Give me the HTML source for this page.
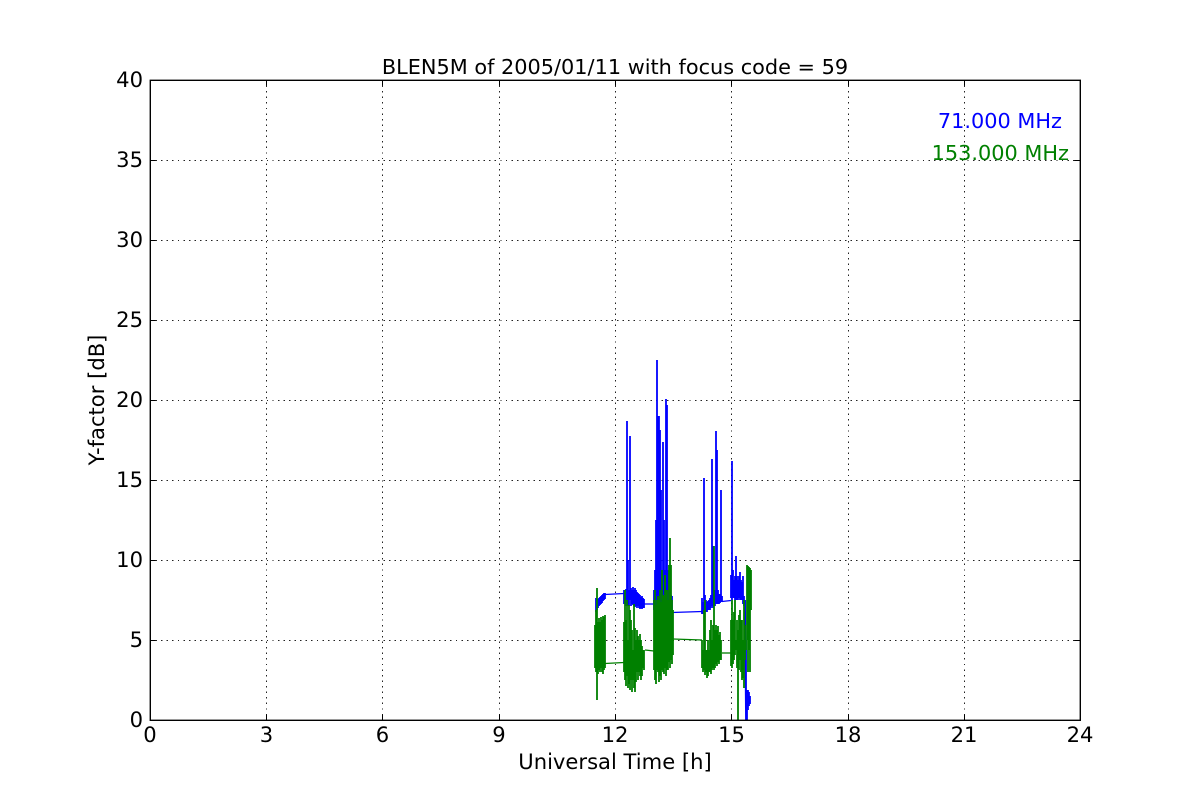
<!DOCTYPE html>
<html><head><meta charset="utf-8"><style>
html,body{margin:0;padding:0;background:#fff;width:1200px;height:800px;overflow:hidden}
svg{display:block}
text{font-family:"DejaVu Sans",sans-serif;font-size:20.830px;fill:#000}
.l text,text.l{font-size:21.100px}
</style></head><body>
<svg width="1200" height="800" viewBox="0 0 1200 800">
<rect width="1200" height="800" fill="#fff"/>
<g stroke="#222" stroke-width="1" stroke-dasharray="1.390 4.170" fill="none" shape-rendering="crispEdges">
<path d="M266.500 80V720M382.500 80V720M499.500 80V720M615.500 80V720M731.500 80V720M848.500 80V720M964.500 80V720"/>
<path d="M150 640.500H1080M150 560.500H1080M150 480.500H1080M150 400.500H1080M150 320.500H1080M150 240.500H1080M150 160.500H1080"/>
</g>
<!-- blue -->
<g fill="none" stroke="#0000ff" stroke-width="1.800">
<path d="M596 612V598M597 610V600M598 608V599M599 606V598M600 605V597M601 604V596M602 603V595M603 601V594M604 600V593M605 599V593"/>
<path stroke-width="1.300" d="M605 594.500L624 593.500"/>
<path d="M624 604V590M625 604V590M626 606V589M627 600V421M628 606V560M629 606V590M630 600V436M631 606V588M632 604V590M633 605V587M634 606V590M635 607V588M636 606V590M637 608V592M638 606V593M639 608V594M640 609V595M641 608V597M642 609V596M643 608V598M644 608V599"/>
<path stroke-width="1.300" d="M644.500 604L654 604"/>
<path d="M654 610V590M655 612V570M656 612V520M657 610V360M658 612V416M659 610V416M660 610V430M661 612V490M662 610V570M663 610V442M664 610V520M665 610V570M666 608V399M667 610V405M668 610V570M669 608V590M670 610V590M671 610V595M672 612V596"/>
<path stroke-width="1.300" d="M672 612.500L702 611.500"/>
<path d="M702 614V598M703 614V602M704 610V478M705 612V595M706 612V600M707 612V602M708 610V601M709 610V600M710 610V598M711 608V595M712 606V459M713 608V546M714 606V596M715 606V590M716 604V431M717 604V450M718 604V590M719 604V594M720 603V594M721 602V490M722 602V596"/>
<path stroke-width="1.300" d="M722 601.500L731 600.500"/>
<path d="M731 598V575M732 600V461M733 598V570M734 598V580M735 600V576M736 600V556M737 600V576M738 600V580M739 598V576M740 600V572M741 600V580M742 600V582M743 604V576M744 606V596M745 610V600"/>
<path d="M745 600L746 720M746 640V720M747 690V720M748 690V710M749 692V706M750 696V704"/>
</g>
<!-- green -->
<g fill="none" stroke="#008000" stroke-width="1.800">
<path d="M595 668V625M596 672V610M597 700V588M598 674V622M599 670V618M600 672V622M601 668V617M602 672V620M603 674V616M604 670V617M605 668V615"/>
<path stroke-width="1.300" d="M605 663.500L624 662.500"/>
<path d="M624 672V622M625 680V590M626 686V620M627 676V600M628 688V640M629 684V605M630 690V610M631 680V620M632 692V630M633 680V650M634 688V604M635 692V628M636 682V640M637 672V630M638 680V636M639 672V640M640 676V634M641 680V640M642 676V646M643 668V650M644 670V650"/>
<path stroke-width="1.300" d="M645 650L654 651"/>
<path d="M654 670V600M655 680V590M656 684V605M657 670V600M658 672V596M659 682V600M660 676V590M661 680V602M662 670V570M663 672V595M664 674V596M665 668V575M666 676V590M667 670V590M668 670V600M669 662V565M670 668V538M671 660V565M672 664V600M673 655V610"/>
<path stroke-width="1.300" d="M673 639L702 640"/>
<path d="M702 668V640M703 672V650M704 670V610M705 675V600M706 672V650M707 678V650M708 676V640M709 672V650M710 672V630M711 674V620M712 670V640M713 668V625M714 670V546M715 668V630M716 664V625M717 666V630M718 662V626M719 664V635M720 660V632M721 660V640"/>
<path stroke-width="1.300" d="M722 653L731 653"/>
<path d="M731 666V620M732 668V600M733 664V620M734 660V612M735 655V600M736 650V640M737 668V620M738 720V630M739 670V615M740 660V610M741 672V620M742 680V620M743 678V640M744 688V600M745 660V625M746 650V640M747 640V565M748 672V566M749 650V567M750 672V568M751 610V570"/>
</g>
<rect x="150.300" y="80.300" width="930" height="640" fill="none" stroke="#000" stroke-width="1.390"/>
<g stroke="#000" stroke-width="1" fill="none" shape-rendering="crispEdges">
<path d="M266.500 80V85.500M382.500 80V85.500M499.500 80V85.500M615.500 80V85.500M731.500 80V85.500M848.500 80V85.500M964.500 80V85.500"/>
<path d="M266.500 720V714.500M382.500 720V714.500M499.500 720V714.500M615.500 720V714.500M731.500 720V714.500M848.500 720V714.500M964.500 720V714.500"/>
<path d="M150 640.500H155.500M150 560.500H155.500M150 480.500H155.500M150 400.500H155.500M150 320.500H155.500M150 240.500H155.500M150 160.500H155.500"/>
<path d="M1080 640.500H1074.500M1080 560.500H1074.500M1080 480.500H1074.500M1080 400.500H1074.500M1080 320.500H1074.500M1080 240.500H1074.500M1080 160.500H1074.500"/>
</g>
<text x="615" y="74" text-anchor="middle">BLEN5M of 2005/01/11 with focus code = 59</text>
<text x="1062" y="128" text-anchor="end" style="fill:#0000ff">71.000 MHz</text>
<text x="1069" y="160" text-anchor="end" style="fill:#008000">153.000 MHz</text>
<g text-anchor="end" class="l">
<text x="143" y="727">0</text><text x="143" y="647">5</text><text x="143" y="567">10</text><text x="143" y="487">15</text><text x="143" y="407">20</text><text x="143" y="327">25</text><text x="143" y="247">30</text><text x="143" y="167">35</text><text x="143" y="87">40</text>
</g>
<g text-anchor="middle" class="l">
<text x="150" y="742">0</text><text x="266.500" y="742">3</text><text x="382.500" y="742">6</text><text x="499" y="742">9</text><text x="615" y="742">12</text><text x="731.500" y="742">15</text><text x="848" y="742">18</text><text x="964" y="742">21</text><text x="1080" y="742">24</text>
<text x="615" y="769">Universal Time [h]</text>
<text transform="translate(104 400) rotate(-90)">Y-factor [dB]</text>
</g>
</svg>
</body></html>
